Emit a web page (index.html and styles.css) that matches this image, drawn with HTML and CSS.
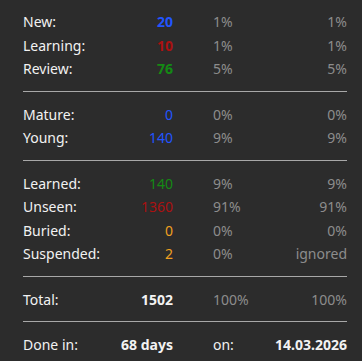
FILE: index.html
```html
<!DOCTYPE html>
<html>
<head>
<meta charset="utf-8">
<link rel="stylesheet" href="styles.css">
</head>
<body>
<div class="stats">
  <div class="row"><span class="label">New:</span><span class="num bold blue">20</span><span class="pct">1%</span><span class="last">1%</span></div>
  <div class="row"><span class="label">Learning:</span><span class="num bold red">10</span><span class="pct">1%</span><span class="last">1%</span></div>
  <div class="row"><span class="label">Review:</span><span class="num bold green">76</span><span class="pct">5%</span><span class="last">5%</span></div>
  <div class="sep"></div>
  <div class="row"><span class="label">Mature:</span><span class="num blue">0</span><span class="pct">0%</span><span class="last">0%</span></div>
  <div class="row"><span class="label">Young:</span><span class="num blue">140</span><span class="pct">9%</span><span class="last">9%</span></div>
  <div class="sep"></div>
  <div class="row"><span class="label">Learned:</span><span class="num green">140</span><span class="pct">9%</span><span class="last">9%</span></div>
  <div class="row"><span class="label">Unseen:</span><span class="num red">1360</span><span class="pct">91%</span><span class="last">91%</span></div>
  <div class="row"><span class="label">Buried:</span><span class="num orange">0</span><span class="pct">0%</span><span class="last">0%</span></div>
  <div class="row"><span class="label">Suspended:</span><span class="num orange">2</span><span class="pct">0%</span><span class="last">ignored</span></div>
  <div class="sep"></div>
  <div class="row"><span class="label">Total:</span><span class="num bold white">1502</span><span class="pct">100%</span><span class="last">100%</span></div>
  <div class="sep"></div>
  <div class="row"><span class="label">Done in:</span><span class="num bold white">68 days</span><span class="pct white">on:</span><span class="last bold white">14.03.2026</span></div>
</div>
</body>
</html>
```

FILE: styles.css
```css
html, body {
  margin: 0;
  padding: 0;
  background: #2c2c2c;
}
body {
  font-family: "Noto Sans", "Open Sans", sans-serif;
  font-size: 14px;
  color: #f2f2f2;
}
.stats {
  width: 324px;
  margin-left: 23px;
  padding-top: 10px;
}
.row {
  display: grid;
  grid-template-columns: 90px 60px 40px 60px 74px;
  height: 23.5px;
  line-height: 23.5px;
  white-space: nowrap;
}
.label { grid-column: 1; }
.num { grid-column: 2; text-align: right; }
.pct { grid-column: 4; color: #8c8c8c; }
.last { grid-column: 5; text-align: right; color: #8c8c8c; }
.bold { font-weight: 700; }
.blue { color: #2255ff; }
.red { color: #aa1111; }
.green { color: #148a14; }
.orange { color: #f0a020; }
.white { color: #f2f2f2; }
.pct.white { color: #f2f2f2; }
.last.white { color: #f2f2f2; }
.sep {
  height: 1px;
  background: #a8a8a8;
  margin: 10px 0 11px;
}
```
